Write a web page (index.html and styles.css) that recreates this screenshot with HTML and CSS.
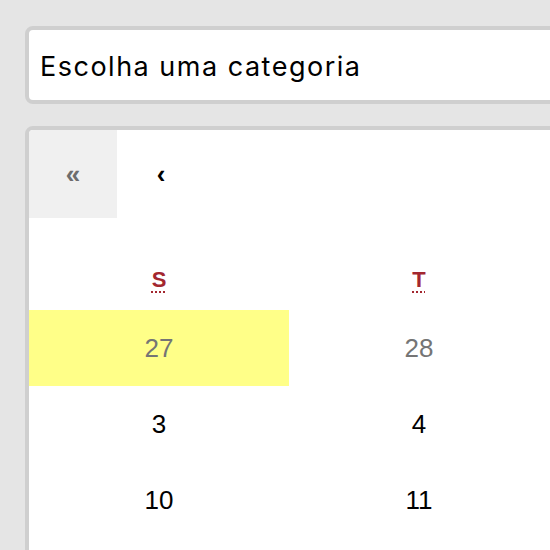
FILE: index.html
```html
<!DOCTYPE html>
<html lang="pt-BR">
<head>
<meta charset="utf-8">
<title>Calendário</title>
<link rel="stylesheet" href="styles.css">
</head>
<body>
<main class="page">
  <div class="select">Escolha uma categoria</div>
  <div class="calendar">
    <nav class="cal-nav">
      <button class="nav-btn nav-btn--disabled" disabled>«</button>
      <button class="nav-btn">‹</button>
      <button class="nav-label">novembro de 2023</button>
      <button class="nav-btn">›</button>
      <button class="nav-btn">»</button>
    </nav>
    <div class="weekdays">
      <div class="weekday"><abbr title="segunda-feira">S</abbr></div>
      <div class="weekday"><abbr title="terça-feira">T</abbr></div>
      <div class="weekday"><abbr title="quarta-feira">Q</abbr></div>
      <div class="weekday"><abbr title="quinta-feira">Q</abbr></div>
      <div class="weekday"><abbr title="sexta-feira">S</abbr></div>
      <div class="weekday"><abbr title="sábado">S</abbr></div>
      <div class="weekday"><abbr title="domingo">D</abbr></div>
    </div>
    <div class="days">
      <button class="tile tile--now tile--neighbor">27</button>
      <button class="tile tile--neighbor">28</button>
      <button class="tile tile--neighbor">29</button>
      <button class="tile tile--neighbor">30</button>
      <button class="tile tile--neighbor">31</button>
      <button class="tile">1</button>
      <button class="tile">2</button>
      <button class="tile">3</button>
      <button class="tile">4</button>
      <button class="tile">5</button>
      <button class="tile">6</button>
      <button class="tile">7</button>
      <button class="tile">8</button>
      <button class="tile">9</button>
      <button class="tile">10</button>
      <button class="tile">11</button>
      <button class="tile">12</button>
      <button class="tile">13</button>
      <button class="tile">14</button>
      <button class="tile">15</button>
      <button class="tile">16</button>
      <button class="tile">17</button>
      <button class="tile">18</button>
      <button class="tile">19</button>
      <button class="tile">20</button>
      <button class="tile">21</button>
      <button class="tile">22</button>
      <button class="tile">23</button>
      <button class="tile">24</button>
      <button class="tile">25</button>
      <button class="tile">26</button>
      <button class="tile">27</button>
      <button class="tile">28</button>
      <button class="tile">29</button>
      <button class="tile">30</button>
    </div>
  </div>
</main>
</body>
</html>
```

FILE: styles.css
```css
html, body {
  margin: 0;
  padding: 0;
  overflow: hidden;
  background: #e5e5e5;
}

.page {
  padding: 26px 0 0 25px;
  width: 1828px;
}

.select {
  box-sizing: border-box;
  height: 78px;
  border: 4px solid #cfcfcf;
  border-radius: 8px;
  background: #ffffff;
  padding-left: 11px;
  padding-top: 2px;
  display: flex;
  align-items: center;
  font-family: Inter, "Liberation Sans", sans-serif;
  font-size: 27px;
  letter-spacing: 1.5px;
  color: #000000;
}

.calendar {
  margin-top: 22px;
  border: 4px solid #cfcfcf;
  border-radius: 8px;
  background: #ffffff;
  overflow: hidden;
  font-family: "Liberation Sans", Arial, sans-serif;
}

.cal-nav {
  display: flex;
  height: 88px;
}

.nav-btn {
  width: 88px;
  height: 88px;
  border: 0;
  padding: 0;
  margin: 0;
  background: transparent;
  font-family: "Liberation Sans", Arial, sans-serif;
  font-size: 26px;
  font-weight: bold;
  color: #000000;
}

.nav-btn--disabled {
  background: #f0f0f0;
  color: #6d6d6d;
}

.nav-label {
  flex: 1;
  border: 0;
  background: transparent;
  font-family: "Liberation Sans", Arial, sans-serif;
  font-size: 26px;
  color: #000000;
}

.weekdays {
  display: grid;
  grid-template-columns: repeat(7, 260px);
  padding-top: 44px;
  margin-bottom: 12px;
}

.weekday {
  height: 36px;
  display: flex;
  align-items: center;
  justify-content: center;
  font-size: 22px;
  font-weight: bold;
  color: #a3272f;
}

.weekday abbr {
  text-decoration: underline dotted;
  text-decoration-thickness: 2px;
  text-underline-offset: 4px;
}

.days {
  display: grid;
  grid-template-columns: repeat(7, 260px);
  grid-auto-rows: 76px;
}

.tile {
  border: 0;
  margin: 0;
  padding: 0;
  background: transparent;
  font-family: "Liberation Sans", Arial, sans-serif;
  font-size: 26px;
  color: #000000;
}

.tile--neighbor {
  color: #757575;
}

.tile--now {
  background: #ffff88;
}
```
